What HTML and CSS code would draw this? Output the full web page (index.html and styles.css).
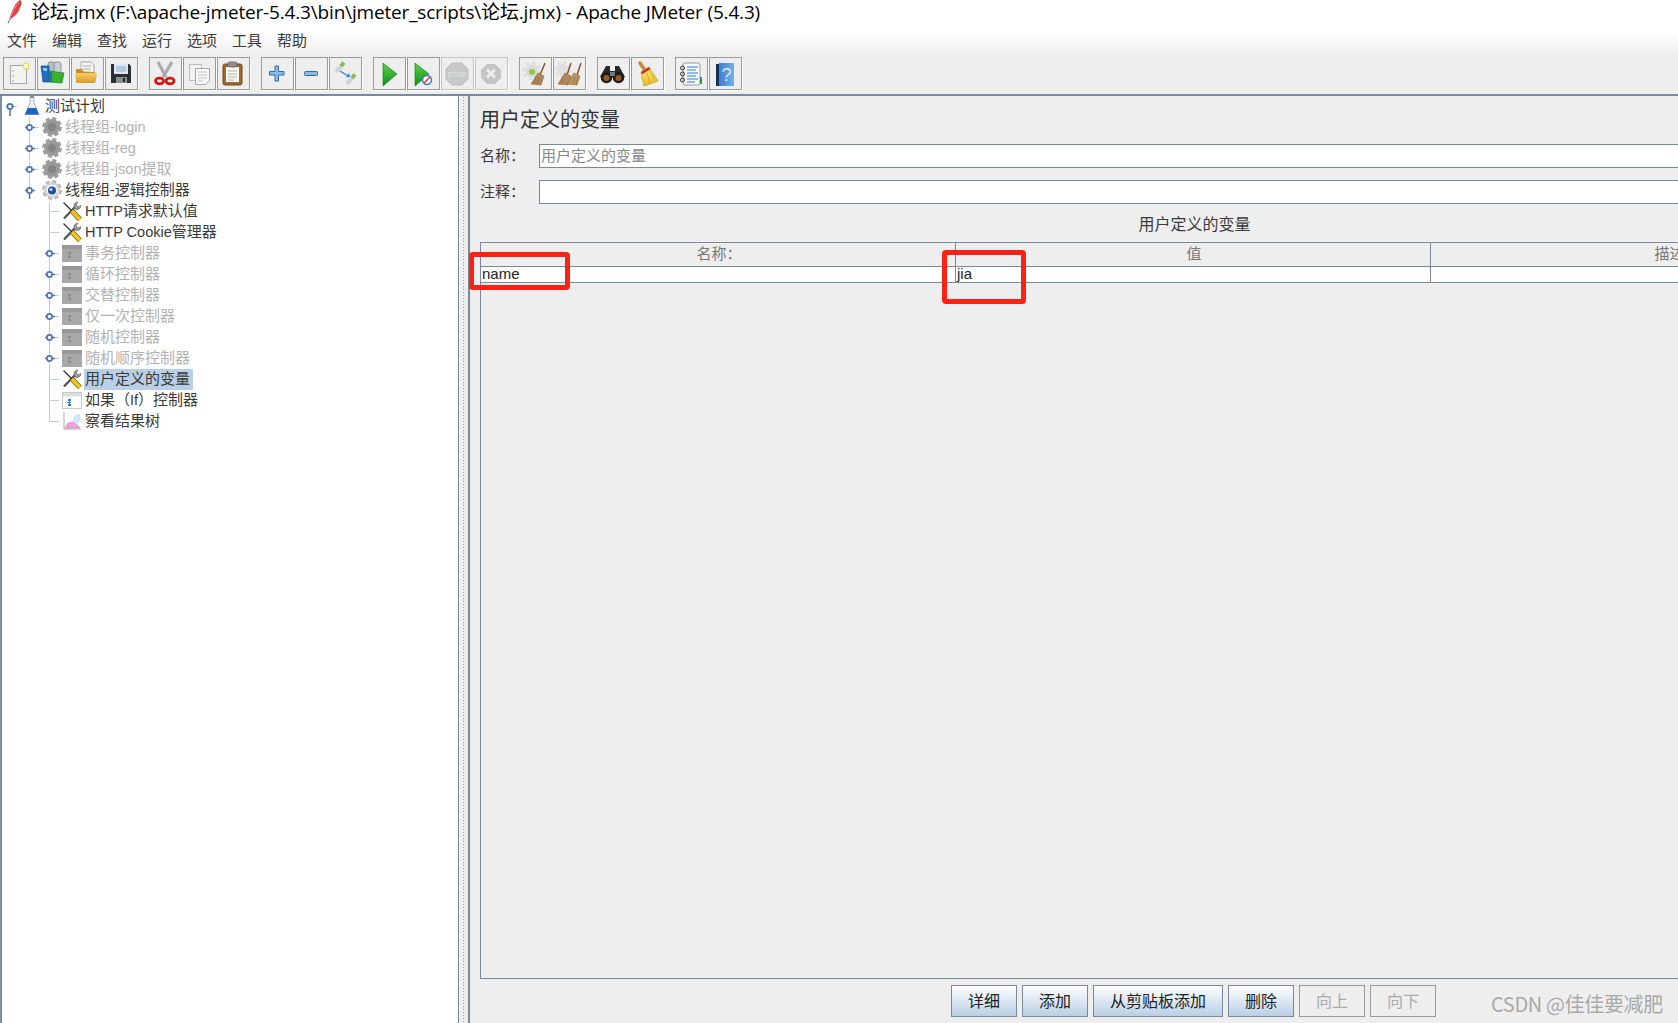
FILE: index.html
```html
<!DOCTYPE html>
<html lang="zh">
<head>
<meta charset="utf-8">
<title>论坛.jmx - Apache JMeter</title>
<link rel="stylesheet" href="styles.css">
</head>
<body>
<svg class="defs" aria-hidden="true">
  <defs>
    <linearGradient id="gFolder" x1="0" y1="0" x2="0" y2="1"><stop offset="0" stop-color="#f6cf6a"/><stop offset="1" stop-color="#d99a2b"/></linearGradient>
    <linearGradient id="gGreen" x1="0" y1="0" x2="0" y2="1"><stop offset="0" stop-color="#5fd04a"/><stop offset="1" stop-color="#0f8f1c"/></linearGradient>
    <linearGradient id="gBroom" x1="0" y1="0" x2="0" y2="1"><stop offset="0" stop-color="#fff07a"/><stop offset="1" stop-color="#e8b820"/></linearGradient>
    <linearGradient id="gBook" x1="0" y1="0" x2="1" y2="0"><stop offset="0" stop-color="#3f7fd0"/><stop offset="1" stop-color="#79aee8"/></linearGradient>

    <symbol id="i-new" viewBox="0 0 31 31">
      <rect x="6.5" y="7.5" width="16" height="18" fill="#f3f3ef" stroke="#a8a8a8"/>
      <circle cx="9" cy="13" r=".7" fill="#888"/><circle cx="9" cy="18" r=".7" fill="#888"/><circle cx="9" cy="23" r=".7" fill="#888"/>
      <circle cx="22" cy="8" r="3" fill="#fff7b0" stroke="#e6d25a"/>
    </symbol>
    <symbol id="i-templates" viewBox="0 0 31 31">
      <rect x="10" y="4" width="7" height="11" rx="2" fill="#b5bcc2" stroke="#8c959c"/>
      <rect x="16" y="4" width="7" height="11" rx="2" fill="#c9ced2" stroke="#8c959c"/>
      <path d="M3 8h8v16H5z" fill="#1d6fc4" stroke="#0e4b8f" stroke-width=".7"/>
      <path d="M5 10h4v3H5.600z" fill="#9cc8f0"/>
      <path d="M11 13l15 2-2 10-13-1z" fill="#38b030" stroke="#1c7f1c" stroke-width=".7"/>
      <rect x="11" y="14" width="3" height="10" fill="#1d6fc4"/>
    </symbol>
    <symbol id="i-open" viewBox="0 0 31 31">
      <path d="M9 4h10l3 3v10H9z" fill="#f5f5f5" stroke="#aaa"/>
      <path d="M11 8h8M11 11h8M11 14h8" stroke="#aaa"/>
      <path d="M4 11h6l2 3h11v9a2 2 0 0 1-2 2H6a2 2 0 0 1-2-2z" fill="#c98e2a"/>
      <path d="M3 15h22l-1.500 9a1.500 1.500 0 0 1-1.500 1H6a1.500 1.500 0 0 1-1.500-1z" fill="url(#gFolder)"/>
    </symbol>
    <symbol id="i-save" viewBox="0 0 31 31">
      <path d="M5 6h18l2 2v17H5z" fill="#2c2f33"/>
      <rect x="8" y="6" width="14" height="10" fill="#dfe8f2"/>
      <path d="M10 9h10M10 11h10M10 13h10" stroke="#6f9ccc" stroke-width=".8"/>
      <rect x="10" y="19" width="11" height="6" fill="#8d9094"/><rect x="17" y="20" width="2" height="4" fill="#222"/>
    </symbol>
    <symbol id="i-cut" viewBox="0 0 31 31">
      <path d="M8 4l8 15M22 4l-9 15" stroke="#b9b9b9" stroke-width="3.500" fill="none"/>
      <path d="M8 4l8 15M22 4l-9 15" stroke="#888" stroke-width=".6" fill="none"/>
      <ellipse cx="9.500" cy="23" rx="4" ry="2.800" fill="none" stroke="#d01818" stroke-width="2.800"/>
      <ellipse cx="20" cy="23" rx="4" ry="2.800" fill="none" stroke="#d01818" stroke-width="2.800"/>
    </symbol>
    <symbol id="i-copy" viewBox="0 0 31 31">
      <rect x="5.500" y="6.500" width="12" height="16" fill="#f2f2f2" stroke="#bdbdbd"/>
      <path d="M11.500 10.500h14v12l-4 4h-10z" fill="#f8f8f8" stroke="#a5a5a5"/>
      <path d="M14 14h9M14 17h9M14 20h9M14 23h5" stroke="#c2c2c2"/>
    </symbol>
    <symbol id="i-paste" viewBox="0 0 31 31">
      <rect x="5" y="6" width="19" height="21" rx="2" fill="#9a6a2e" stroke="#6e4a1c"/>
      <rect x="8" y="9" width="13" height="15" fill="#f7f7f2"/>
      <rect x="10" y="4" width="9" height="5" rx="1.500" fill="#8d8d8d" stroke="#5d5d5d" stroke-width=".7"/>
      <path d="M10 13h9M10 16h9M10 19h9M10 22h6" stroke="#b3b3b3"/>
    </symbol>
    <symbol id="i-plus" viewBox="0 0 31 31">
      <path d="M13 8h3.500v5.500H22V17h-5.500v6H13v-6H7.500v-3.500H13z" fill="#8fb8e4" stroke="#2f6cab"/>
    </symbol>
    <symbol id="i-minus" viewBox="0 0 31 31">
      <rect x="8.500" y="13.500" width="13" height="4" rx="1" fill="#8fb8e4" stroke="#2f6cab"/>
    </symbol>
    <symbol id="i-toggle" viewBox="0 0 31 31">
      <path d="M6 14l6-7" stroke="#d2d2d2" stroke-width="4"/><path d="M11 8l3-3.500" stroke="#7cbf5a" stroke-width="4"/>
      <path d="M17 26l6-7" stroke="#d2d2d2" stroke-width="4"/><path d="M22 20l3-3.500" stroke="#7cbf5a" stroke-width="4"/>
      <path d="M10 13l8 5" stroke="#2f7fe0" stroke-width="1.300"/><path d="M19 15l1 4-4 .5z" fill="#2f7fe0"/>
    </symbol>
    <symbol id="i-start" viewBox="0 0 31 31">
      <path d="M9 5l14 11-14 12z" fill="url(#gGreen)" stroke="#0d7a18" stroke-width=".6"/>
    </symbol>
    <symbol id="i-startnt" viewBox="0 0 31 31">
      <path d="M7 5l14 11-14 12z" fill="url(#gGreen)" stroke="#0d7a18" stroke-width=".6"/>
      <circle cx="19" cy="22" r="4.500" fill="#fff" stroke="#3a78d8" stroke-width="1.500"/>
      <path d="M16 25l6-6" stroke="#e03030" stroke-width="1.400"/>
    </symbol>
    <symbol id="i-stop" viewBox="0 0 31 31">
      <path d="M10 5h10l6 6v10l-6 6H10l-6-6V11z" fill="#c9c9c9" stroke="#bdbdbd"/>
      <text x="15" y="18.500" class="stoptext">STOP</text>
    </symbol>
    <symbol id="i-shutdown" viewBox="0 0 31 31">
      <path d="M11 6h8l6 6v8l-6 6h-8l-6-6v-8z" fill="#c4c4c4"/>
      <path d="M11 11.500l8 8M19 11.500l-8 8" stroke="#eee" stroke-width="2.500"/>
    </symbol>
    <symbol id="i-clear" viewBox="0 0 31 31">
      <circle cx="12" cy="13" r="6.500" fill="#dcdcdc"/>
      <circle cx="12" cy="13" r="8" fill="none" stroke="#dcdcdc" stroke-width="3" stroke-dasharray="3 3.280"/>
      <circle cx="12" cy="14" r="3" fill="#8ecb45"/>
      <path d="M25 5l-5 12" stroke="#7a5a30" stroke-width="1.500"/>
      <path d="M18 15l6 3-3 9-10-1z" fill="#b0885a" stroke="#8a6638" stroke-width=".6"/>
      <path d="M16 18l-2 8M19 19l-2 8" stroke="#8a6638" stroke-width=".6"/>
    </symbol>
    <symbol id="i-clearall" viewBox="0 0 31 31">
      <circle cx="9" cy="12" r="6" fill="#e0e0e0"/>
      <circle cx="9" cy="12" r="7.500" fill="none" stroke="#e0e0e0" stroke-width="3" stroke-dasharray="3 2.900"/>
      <path d="M17 5l-4 12M27 5l-4 12" stroke="#7a5a30" stroke-width="1.500"/>
      <path d="M11 15l6 3-3 9-10-1z" fill="#b0885a" stroke="#8a6638" stroke-width=".6"/>
      <path d="M20 15l6 3-3 9-10-1z" fill="#bb9262" stroke="#8a6638" stroke-width=".6"/>
      <path d="M9 19l-2 7M21 19l-2 8M24 19l-2 8" stroke="#8a6638" stroke-width=".6"/>
    </symbol>
    <symbol id="i-find" viewBox="0 0 31 31">
      <path d="M8 8h4v5h5V8h4l6 11H2z" fill="#2a2a2a"/>
      <circle cx="8.500" cy="19.500" r="5.800" fill="#1c1c1c"/><circle cx="20.500" cy="19.500" r="5.800" fill="#1c1c1c"/>
      <circle cx="8.500" cy="20" r="3" fill="#9a5a20"/><circle cx="20.500" cy="20" r="3" fill="#9a5a20"/>
      <rect x="12" y="14" width="5" height="4" fill="#777"/>
    </symbol>
    <symbol id="i-broom" viewBox="0 0 31 31">
      <path d="M8 5l6 9" stroke="#c48a3c" stroke-width="3.500" stroke-linecap="round"/>
      <path d="M9 14l8-5 9 14-14 5z" fill="url(#gBroom)" stroke="#c49a20" stroke-width=".7"/>
      <path d="M9 14l8-5 1.300 2.200-8 5z" fill="#d02a2a"/>
      <path d="M15 15l3 11M18 13l5 10" stroke="#c49a20" stroke-width=".7"/>
    </symbol>
    <symbol id="i-list" viewBox="0 0 31 31">
      <rect x="7" y="5" width="17" height="22" rx="2" fill="#f7f7f7" stroke="#9a9a9a"/>
      <path d="M11 9h11M11 12h9M11 15h11M11 18h9M11 21h11M11 24h8" stroke="#2f7fd8" stroke-width="1.100"/>
      <circle cx="6.500" cy="10" r="2" fill="none" stroke="#333"/><circle cx="6.500" cy="16" r="2" fill="none" stroke="#333"/><circle cx="6.500" cy="22" r="2" fill="none" stroke="#333"/>
      <rect x="24" y="19" width="2" height="3" fill="#2f7fd8"/><rect x="24" y="22" width="2" height="4" fill="#2a9a2a"/>
    </symbol>
    <symbol id="i-help" viewBox="0 0 31 31">
      <path d="M6 6h3v22H6z" fill="#16304f"/>
      <path d="M9 5h15v23H9z" fill="url(#gBook)"/>
      <text x="16.500" y="23" class="helptext">?</text>
    </symbol>

    <symbol id="t-flask" viewBox="0 0 20 20">
      <path d="M8 1h4v6l5 11.500H3L8 7z" fill="#eef2f6" stroke="#98a4ae" stroke-width=".8"/>
      <path d="M5.800 12h8.400l2.800 6.500H3z" fill="#1f62c8"/>
      <path d="M8 1h4" stroke="#777" stroke-width="1.500"/>
    </symbol>
    <symbol id="t-gearoff" viewBox="0 0 20 20">
      <circle cx="10" cy="10" r="8" fill="#9a9a9a"/>
      <circle cx="10" cy="10" r="8.800" fill="none" stroke="#9a9a9a" stroke-width="2.200" stroke-dasharray="4.200 2.710"/>
      <circle cx="10" cy="10" r="4.200" fill="#858585"/>
    </symbol>
    <symbol id="t-gearon" viewBox="0 0 20 20">
      <circle cx="10" cy="10" r="8" fill="#d4d4d4"/>
      <circle cx="10" cy="10" r="8.800" fill="none" stroke="#b4b4b4" stroke-width="2.200" stroke-dasharray="4.200 2.710"/>
      <circle cx="10" cy="10" r="5.500" fill="#f4f6fa"/>
      <circle cx="10" cy="10.500" r="4" fill="#1f4f9e"/>
      <circle cx="9" cy="9.500" r="1.600" fill="#bcd4f2"/>
    </symbol>
    <symbol id="t-tools" viewBox="0 0 20 20">
      <path d="M2 17.500L13 6" stroke="#555" stroke-width="2.400"/>
      <path d="M12 6a4 4 0 0 1 4-5l-2 3 2 2 3-1.500a4 4 0 0 1-6 3.500z" fill="#9a9a9a" stroke="#444" stroke-width=".5"/>
      <path d="M1.500 1.500l9 9" stroke="#333" stroke-width="1.300"/>
      <path d="M10 10l8 8.500" stroke="#6b5610" stroke-width="5"/>
      <path d="M10 10l8 8.500" stroke="#f5c71a" stroke-width="3.600"/>
    </symbol>
    <symbol id="t-ctrl" viewBox="0 0 20 20">
      <rect x="0" y="2" width="20" height="17" fill="#a8a8a8"/>
      <rect x="0" y="2" width="20" height="4" fill="#999"/>
      <rect x="6" y="9" width="3" height="2" fill="#8c8c8c"/><rect x="6" y="13" width="3" height="2" fill="#8c8c8c"/><path d="M7.500 11v2" stroke="#8c8c8c"/>
    </symbol>
    <symbol id="t-if" viewBox="0 0 20 20">
      <rect x=".5" y="2.500" width="19" height="16" fill="#fff" stroke="#c9c9c9"/>
      <rect x="1" y="3" width="18" height="3.500" fill="#ddd"/>
      <rect x="6" y="9" width="3" height="2" fill="#2f7fd8"/><rect x="6" y="14" width="3" height="2" fill="#2f7fd8"/><path d="M7.500 11v3M5 12.500h4" stroke="#2f7fd8"/>
    </symbol>
    <symbol id="t-result" viewBox="0 0 20 20">
      <path d="M2 1v17h17" fill="none" stroke="#aaa"/>
      <path d="M3 17l3-5 5-1 3 2 4 4z" fill="#f0a0d8" stroke="#d070b8" stroke-width=".5"/>
      <path d="M11 11l2-6 4-2 1 5-3 5z" fill="#d4e8fa" stroke="#a8c8e8" stroke-width=".5"/>
    </symbol>

    <symbol id="c-root" viewBox="0 0 20 21">
      <path d="M12 10.500h5" stroke="#b8cfe5"/>
      <path d="M10 13v7" stroke="#4f73bb" stroke-width="1.500"/>
      <path d="M6 10.500h2M12 10.500h2" stroke="#4f73bb" stroke-width="1.500"/>
      <circle cx="10" cy="10.500" r="2.600" fill="#fff" stroke="#4f73bb" stroke-width="1.700"/>
    </symbol>
    <symbol id="c-closed" viewBox="0 0 20 21">
      <path d="M9.500 0v21" stroke="#b8cfe5"/>
      <path d="M13 10.500h6" stroke="#b8cfe5"/>
      <path d="M5 10.500h3M12 10.500h3" stroke="#4f73bb" stroke-width="1.500"/>
      <circle cx="9.500" cy="10.500" r="2.600" fill="#fff" stroke="#4f73bb" stroke-width="1.700"/>
    </symbol>
    <symbol id="c-open" viewBox="0 0 20 21">
      <path d="M9.500 0v9" stroke="#b8cfe5"/>
      <path d="M9.500 12v7M5 10.500h3M12 10.500h3" stroke="#4f73bb" stroke-width="1.500"/>
      <circle cx="9.500" cy="10.500" r="2.600" fill="#fff" stroke="#4f73bb" stroke-width="1.700"/>
    </symbol>
    <symbol id="c-leaf" viewBox="0 0 20 21">
      <path d="M9.500 0v21M9.500 10.500H19" stroke="#b8cfe5"/>
    </symbol>
    <symbol id="c-last" viewBox="0 0 20 21">
      <path d="M9.500 0v10.500H19" fill="none" stroke="#b8cfe5"/>
    </symbol>
    <symbol id="i-feather" viewBox="0 0 20 26">
      <path d="M16 1c2 1 2 4 0 8-2 5-5 8-8 10l-2-1C8 12 11 4 16 1z" fill="#e2403f"/>
      <path d="M15 3C12 7 9 12 7 17" stroke="#f4a0a0" stroke-width=".8" fill="none"/>
      <path d="M6 18l2 1-3 3z" fill="#b04a9a"/>
      <path d="M5 22l-1 2" stroke="#6060a0" stroke-width="1.200"/>
    </symbol>
  </defs>
</svg>

<div class="app">
  <header class="titlebar">
    <svg class="appicon"><use href="#i-feather"/></svg>
    <span class="titletext">论坛.jmx (F:\apache-jmeter-5.4.3\bin\jmeter_scripts\论坛.jmx) - Apache JMeter (5.4.3)</span>
  </header>

  <nav class="menubar">
    <span>文件</span><span>编辑</span><span>查找</span><span>运行</span><span>选项</span><span>工具</span><span>帮助</span>
  </nav>

  <div class="toolbar">
    <div class="tgroup">
      <button class="tbtn"><svg><use href="#i-new"/></svg></button>
      <button class="tbtn"><svg><use href="#i-templates"/></svg></button>
      <button class="tbtn"><svg><use href="#i-open"/></svg></button>
      <button class="tbtn"><svg><use href="#i-save"/></svg></button>
    </div>
    <div class="tgroup">
      <button class="tbtn"><svg><use href="#i-cut"/></svg></button>
      <button class="tbtn"><svg><use href="#i-copy"/></svg></button>
      <button class="tbtn"><svg><use href="#i-paste"/></svg></button>
    </div>
    <div class="tgroup">
      <button class="tbtn"><svg><use href="#i-plus"/></svg></button>
      <button class="tbtn"><svg><use href="#i-minus"/></svg></button>
      <button class="tbtn"><svg><use href="#i-toggle"/></svg></button>
    </div>
    <div class="tgroup">
      <button class="tbtn"><svg><use href="#i-start"/></svg></button>
      <button class="tbtn"><svg><use href="#i-startnt"/></svg></button>
      <button class="tbtn off"><svg><use href="#i-stop"/></svg></button>
      <button class="tbtn off"><svg><use href="#i-shutdown"/></svg></button>
    </div>
    <div class="tgroup">
      <button class="tbtn"><svg><use href="#i-clear"/></svg></button>
      <button class="tbtn"><svg><use href="#i-clearall"/></svg></button>
    </div>
    <div class="tgroup">
      <button class="tbtn"><svg><use href="#i-find"/></svg></button>
      <button class="tbtn"><svg><use href="#i-broom"/></svg></button>
    </div>
    <div class="tgroup">
      <button class="tbtn"><svg><use href="#i-list"/></svg></button>
      <button class="tbtn"><svg><use href="#i-help"/></svg></button>
    </div>
  </div>

  <main class="split">
    <aside class="tree">
      <div class="row"><svg class="conn"><use href="#c-root"/></svg><svg class="ico"><use href="#t-flask"/></svg><span class="lbl">测试计划</span></div>
      <div class="row l1 dim"><svg class="conn"><use href="#c-closed"/></svg><svg class="ico"><use href="#t-gearoff"/></svg><span class="lbl">线程组<span class="lat">-login</span></span></div>
      <div class="row l1 dim"><svg class="conn"><use href="#c-closed"/></svg><svg class="ico"><use href="#t-gearoff"/></svg><span class="lbl">线程组<span class="lat">-reg</span></span></div>
      <div class="row l1 dim"><svg class="conn"><use href="#c-closed"/></svg><svg class="ico"><use href="#t-gearoff"/></svg><span class="lbl">线程组<span class="lat">-json</span>提取</span></div>
      <div class="row l1"><svg class="conn"><use href="#c-open"/></svg><svg class="ico"><use href="#t-gearon"/></svg><span class="lbl">线程组<span class="lat">-</span>逻辑控制器</span></div>
      <div class="row l2"><svg class="conn"><use href="#c-leaf"/></svg><svg class="ico"><use href="#t-tools"/></svg><span class="lbl"><span class="lat">HTTP</span>请求默认值</span></div>
      <div class="row l2"><svg class="conn"><use href="#c-leaf"/></svg><svg class="ico"><use href="#t-tools"/></svg><span class="lbl"><span class="lat">HTTP Cookie</span>管理器</span></div>
      <div class="row l2 dim"><svg class="conn"><use href="#c-closed"/></svg><svg class="ico"><use href="#t-ctrl"/></svg><span class="lbl">事务控制器</span></div>
      <div class="row l2 dim"><svg class="conn"><use href="#c-closed"/></svg><svg class="ico"><use href="#t-ctrl"/></svg><span class="lbl">循环控制器</span></div>
      <div class="row l2 dim"><svg class="conn"><use href="#c-closed"/></svg><svg class="ico"><use href="#t-ctrl"/></svg><span class="lbl">交替控制器</span></div>
      <div class="row l2 dim"><svg class="conn"><use href="#c-closed"/></svg><svg class="ico"><use href="#t-ctrl"/></svg><span class="lbl">仅一次控制器</span></div>
      <div class="row l2 dim"><svg class="conn"><use href="#c-closed"/></svg><svg class="ico"><use href="#t-ctrl"/></svg><span class="lbl">随机控制器</span></div>
      <div class="row l2 dim"><svg class="conn"><use href="#c-closed"/></svg><svg class="ico"><use href="#t-ctrl"/></svg><span class="lbl">随机顺序控制器</span></div>
      <div class="row l2 sel"><svg class="conn"><use href="#c-leaf"/></svg><svg class="ico"><use href="#t-tools"/></svg><span class="lbl">用户定义的变量</span></div>
      <div class="row l2"><svg class="conn"><use href="#c-leaf"/></svg><svg class="ico"><use href="#t-if"/></svg><span class="lbl">如果（<span class="lat">If</span>）控制器</span></div>
      <div class="row l2"><svg class="conn"><use href="#c-last"/></svg><svg class="ico"><use href="#t-result"/></svg><span class="lbl">察看结果树</span></div>
    </aside>

    <div class="divider"></div>

    <section class="panel">
      <h1 class="ptitle">用户定义的变量</h1>
      <div class="field"><label class="flabel">名称：</label><div class="finput">用户定义的变量</div></div>
      <div class="field"><label class="flabel">注释：</label><div class="finput"></div></div>
      <div class="tcaption">用户定义的变量</div>
      <div class="tablebox">
        <div class="thead">
          <div class="c c1">名称：</div><div class="c c2">值</div><div class="c c3">描述：</div>
        </div>
        <div class="trow">
          <div class="c c1">name</div><div class="c c2">jia</div><div class="c c3"></div>
        </div>
      </div>
      <div class="actions">
        <button class="abtn w1">详细</button>
        <button class="abtn w1">添加</button>
        <button class="abtn w2">从剪贴板添加</button>
        <button class="abtn w1">删除</button>
        <button class="abtn w1 off">向上</button>
        <button class="abtn w1 off">向下</button>
      </div>
    </section>
  </main>

  <div class="mark m1"></div>
  <div class="mark m2"></div>
  <div class="watermark">CSDN @佳佳要减肥</div>
</div>
</body>
</html>
```

FILE: styles.css
```css
* { box-sizing: border-box; }

html, body {
  margin: 0;
  height: 100%;
  overflow: hidden;
  background: #eee;
}

.defs { position: absolute; width: 0; height: 0; }

.app {
  position: relative;
  width: 1678px;
  height: 1023px;
  overflow: hidden;
  display: flex;
  flex-direction: column;
  font: 15px/21px "Liberation Sans", "Noto Sans CJK SC", sans-serif;
  color: #3a3a3a;
  background: linear-gradient(to bottom, #fff 0, #fff 30px, #eee 57px);
}

/* title bar */
.titlebar {
  height: 25px;
  flex: none;
  display: flex;
  align-items: center;
  padding-left: 4px;
  color: #000;
}
.appicon { width: 20px; height: 26px; flex: none; margin-top: -2px; }
.titletext {
  margin-left: 7px;
  font: 19px/25px "Open Sans", "Noto Sans CJK SC", sans-serif;
  letter-spacing: -.17px;
  white-space: nowrap;
}

/* menu */
.menubar {
  height: 30px;
  flex: none;
  display: flex;
  align-items: center;
  gap: 15px;
  padding-left: 7px;
}

/* toolbar */
.toolbar {
  height: 39px;
  flex: none;
  padding: 2px 0 0 3px;
  display: flex;
  gap: 11px;
}
.tgroup { display: flex; gap: 1px; }
.tbtn {
  width: 33px;
  height: 33px;
  padding: 0;
  background: #eee;
  border: 1px solid #9a9a9a;
  box-shadow: 1px 1px 0 #fff;
}
.tbtn.off { border-color: #c4c4c4; }
.tbtn svg { display: block; width: 31px; height: 31px; }
.stoptext { font: bold 7px "Liberation Sans", sans-serif; fill: #ddd; text-anchor: middle; }
.helptext { font: 18px "Liberation Sans", sans-serif; fill: #dcecff; text-anchor: middle; }

/* split */
.split {
  flex: 1;
  min-height: 0;
  display: flex;
  border-top: 2px solid #7a8a9c;
}

.tree {
  width: 458px;
  flex: none;
  background: #fff;
  border-left: 2px solid #7f8fa3;
}
.row {
  height: 21px;
  display: flex;
  align-items: stretch;
  white-space: nowrap;
  margin-left: -2px;
}
.row.l1 { padding-left: 20px; }
.row.l2 { padding-left: 40px; }
.conn { width: 20px; height: 21px; flex: none; }
.ico { width: 20px; height: 20px; flex: none; margin: 0 2px; }
.lbl { padding: 0 3px 0 1px; line-height: 19px; }
.lat { font-size: 14.5px; }
.dim .lbl { color: #b2b2b2; }
.sel .lbl { background: #b8cfe5; }

.divider {
  width: 10px;
  flex: none;
  border-left: 1px solid #7a8a9c;
  background-color: #eee;
  background-image: radial-gradient(circle, #8f9cab 0.8px, transparent 1px);
  background-size: 3px 3px;
  background-position: 3px 0;
  background-repeat: repeat-y;
}

.panel {
  flex: 1;
  min-width: 0;
  background: #eee;
  border-left: 2px solid #7a8a9c;
  padding-left: 10px;
  overflow: hidden;
  display: flex;
  flex-direction: column;
}
.ptitle {
  margin: 11px 0 11px;
  font-size: 20px;
  font-weight: 400;
  line-height: 26px;
  color: #333;
}
.field {
  display: flex;
  height: 24px;
  margin-bottom: 12px;
  align-items: stretch;
}
.flabel { width: 59px; flex: none; line-height: 24px; }
.finput {
  flex: 1;
  background: #fff;
  border: 1px solid #7a8a9c;
  border-right: 0;
  padding-left: 1px;
  color: #888;
  line-height: 22px;
}
.tcaption {
  margin-top: -2px;
  height: 28px;
  width: 1429px;
  text-align: center;
  font-size: 16px;
  line-height: 22px;
}
.tablebox {
  flex: 1;
  min-height: 0;
  border-left: 1px solid #7a8a9c;
  border-top: 1px solid #7a8a9c;
  border-bottom: 1px solid #7a8a9c;
  width: 1500px;
}
.thead, .trow { display: flex; }
.thead { height: 24px; border-bottom: 1px solid #7a8a9c; color: #777; text-align: center; line-height: 21px; }
.thead .c { padding-left: 2px; }
.trow { height: 16px; border-bottom: 1px solid #7a8a9c; background: #fff; color: #222; line-height: 13px; }
.c { flex: none; overflow: hidden; white-space: nowrap; }
.c1 { width: 474px; }
.c2 { width: 475px; border-left: 1px solid #7a8a9c; }
.c3 { width: 491px; border-left: 1px solid #7a8a9c; }
.trow .c { padding-left: 1px; overflow: visible; }

.actions {
  flex: none;
  height: 44px;
  padding: 6px 0 0 471px;
  display: flex;
  gap: 5px;
  align-items: flex-start;
}
.abtn {
  height: 32px;
  padding: 0;
  font: inherit;
  font-size: 16px;
  color: #222;
  border: 1px solid #7a8a9c;
  background: linear-gradient(to bottom, #fff, #b8cfe5);
}
.abtn.w1 { width: 66px; }
.abtn.w2 { width: 130px; }
.abtn.off {
  background: #eee;
  border-color: #9a9a9a;
  color: #aaa;
}

/* overlays: annotation rectangles and watermark */
.mark {
  position: absolute;
  border: 5px solid #fb2114;
  border-radius: 4px;
}
.m1 { left: 469px; top: 252px; width: 101px; height: 38px; }
.m2 { left: 942px; top: 250px; width: 84px; height: 54px; }

.watermark {
  position: absolute;
  left: 1491px;
  top: 991px;
  font: 20px/26px "Liberation Sans Narrow", "Noto Sans CJK SC", sans-serif;
  letter-spacing: -.35px;
  color: rgba(120, 120, 120, .6);
  white-space: nowrap;
}
```
